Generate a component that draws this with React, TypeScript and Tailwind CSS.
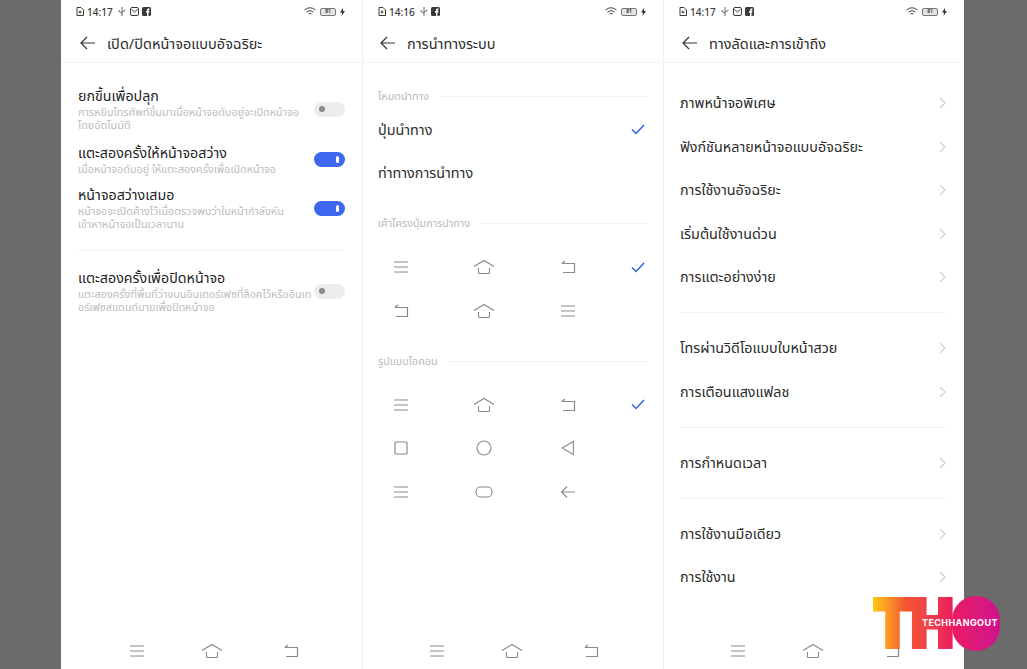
const MenuIcon = () => (
  <svg width="16" height="14" viewBox="0 0 16 14" fill="none" stroke="#8a8a8a" strokeWidth="1.2">
    <path d="M1 2h14M1 7h14M1 12h14" />
  </svg>
);

const HomeIcon = () => (
  <svg width="22" height="16" viewBox="0 0 22 16" fill="none" stroke="#8a8a8a" strokeWidth="1.1">
    <path d="M1 7.500 11 1.500l10 6" />
    <path d="M5.500 9v4.500c0 .6.4 1 1 1h9c.6 0 1-.4 1-1V9" />
  </svg>
);

const ReturnIcon = () => (
  <svg width="16" height="14" viewBox="0 0 16 14" fill="none" stroke="#8a8a8a" strokeWidth="1.2">
    <path d="M2 3.500h12.500v9H3" />
    <path d="M5 1 1.800 3.500" />
  </svg>
);

const SquareIcon = () => (
  <svg width="14" height="14" viewBox="0 0 14 14" fill="none" stroke="#8a8a8a" strokeWidth="1.2">
    <rect x="1" y="1" width="12" height="12" rx="1" />
  </svg>
);

const CircleIcon = () => (
  <svg width="16" height="16" viewBox="0 0 16 16" fill="none" stroke="#8a8a8a" strokeWidth="1.1">
    <circle cx="8" cy="8" r="7" />
  </svg>
);

const TriangleIcon = () => (
  <svg width="14" height="16" viewBox="0 0 14 16" fill="none" stroke="#8a8a8a" strokeWidth="1.1">
    <path d="M1 8 12.500 1.500v13z" />
  </svg>
);

const PillIcon = () => (
  <svg width="18" height="12" viewBox="0 0 18 12" fill="none" stroke="#8a8a8a" strokeWidth="1.1">
    <rect x="1" y="1" width="16" height="10" rx="4.500" />
  </svg>
);

const BackIcon = () => (
  <svg width="16" height="14" viewBox="0 0 16 14" fill="none" stroke="#8a8a8a" strokeWidth="1.1">
    <path d="M15 7H1.500M7 1.500 1.500 7 7 12.500" />
  </svg>
);

const Check = () => (
  <svg width="14" height="11" viewBox="0 0 14 11" fill="none" stroke="#2f5fe8" strokeWidth="1.5">
    <path d="M1 5.500 5 9.500 13 1" />
  </svg>
);

const Chevron = () => (
  <svg width="7" height="12" viewBox="0 0 7 12" fill="none" stroke="#cfcfcf" strokeWidth="1.2">
    <path d="M1 1l5 5-5 5" />
  </svg>
);

const StatusBar = ({ time, mail = true }: { time: string; mail?: boolean }) => (
  <div className="h-[23px] flex items-center justify-between pl-[15px] pr-[17px] text-[#3a3a3a]">
    <div className="flex items-center gap-[3px]">
      <svg width="8" height="9" viewBox="0 0 8 9" fill="none" stroke="#3a3a3a" strokeWidth="1">
        <path d="M1 .5h4L7.500 3v5.500H1z" />
        <circle cx="4" cy="5" r="1" />
      </svg>
      <span className="text-[10px] font-medium leading-none">{time}</span>
      <svg width="8" height="9" viewBox="0 0 8 9" fill="none" stroke="#555" strokeWidth="0.9" className="ml-[2px]">
        <path d="M4 0v9M1 3v1.500L4 6M7 2.500v1L4 5" />
      </svg>
      {mail && (
        <svg width="9" height="9" viewBox="0 0 9 9" fill="none" stroke="#3a3a3a" strokeWidth="1" className="ml-[1px]">
          <rect x=".5" y=".5" width="8" height="8" rx="1.500" />
          <path d="M1.500 2.500 4.500 5l3-2.500" />
        </svg>
      )}
      <svg width="9" height="9" viewBox="0 0 9 9">
        <rect width="9" height="9" rx="1.500" fill="#3a3a3a" />
        <path d="M5 9V5.500H4V4h1V3c0-1 .6-1.500 1.500-1.500H7.500V3H7c-.4 0-.5.2-.5.5V4h1L7.300 5.500H6.500V9z" fill="#fff" />
      </svg>
    </div>
    <div className="flex items-center gap-[4px]">
      <svg width="12" height="9" viewBox="0 0 12 9" fill="none" stroke="#444" strokeWidth="1">
        <path d="M.5 3Q6-1.500 11.500 3M2.500 5q3.500-3 7 0M4.500 7q1.500-1.300 3 0" />
      </svg>
      <div className="w-[16px] h-[8px] rounded-[2px] border border-[#777] bg-[#e4e4e4] flex items-center justify-center text-[5px] leading-none font-bold text-[#444]">
        81
      </div>
      <svg width="5" height="8" viewBox="0 0 5 8">
        <path d="M3 0 0 4.500h2L1.500 8 5 3H3z" fill="#333" />
      </svg>
    </div>
  </div>
);

const Header = ({ title, pad }: { title: string; pad: string }) => (
  <div className={`h-[40px] pt-[1px] flex items-center gap-[12px] border-b border-[#f4f4f4] ${pad}`}>
    <svg width="15" height="14" viewBox="0 0 15 14" fill="none" stroke="#333" strokeWidth="1.2">
      <path d="M15 7H1M7 1 1 7l6 6" />
    </svg>
    <span className="text-[14.500px] leading-none text-[#2b2b2b]">{title}</span>
  </div>
);

const NavBar = ({ left }: { left: string }) => (
  <div className={`mt-auto h-[36px] flex items-center shrink-0 ${left}`}>
    <div className="w-[16px] flex justify-center">
      <MenuIcon />
    </div>
    <div className="ml-[56px] w-[22px] flex justify-center">
      <HomeIcon />
    </div>
    <div className="ml-[60px] w-[16px] flex justify-center">
      <ReturnIcon />
    </div>
  </div>
);

const Toggle = ({ on }: { on?: boolean }) =>
  on ? (
    <div className="w-[31px] h-[15px] rounded-full bg-[#3d68ee] flex items-center justify-end pr-[6px] shrink-0">
      <div className="w-[3px] h-[7px] rounded-full bg-white" />
    </div>
  ) : (
    <div className="w-[31px] h-[15px] rounded-full bg-[#ececec] flex items-center pl-[5px] shrink-0">
      <div className="w-[6px] h-[6px] rounded-full bg-[#8c8c8c]" />
    </div>
  );

const SettingRow = ({
  title,
  desc,
  on,
  className,
  togglePad,
}: {
  title: string;
  desc: string[];
  on?: boolean;
  className: string;
  togglePad: string;
}) => (
  <div className={`flex justify-between ${className}`}>
    <div className="min-w-0">
      <div className="text-[14.250px] leading-[18px] text-[#1f1f1f]">{title}</div>
      {desc.map((d) => (
        <div key={d} className="text-[10.800px] leading-[13px] text-[#bcbcbc] whitespace-nowrap">
          {d}
        </div>
      ))}
    </div>
    <div className={togglePad}>
      <Toggle on={on} />
    </div>
  </div>
);

const SectionLabel = ({ text, className }: { text: string; className: string }) => (
  <div className={`flex items-center gap-[10px] ${className}`}>
    <span className="text-[10.800px] leading-[14px] text-[#b8b8b8] whitespace-nowrap">{text}</span>
    <div className="flex-1 h-px bg-[#f3f3f3]" />
  </div>
);

const IconRow = ({ icons, checked }: { icons: React.ReactNode[]; checked?: boolean }) => (
  <div className="h-[43.500px] flex items-center">
    <div className="w-[16px] flex justify-center">{icons[0]}</div>
    <div className="ml-[64px] w-[22px] flex justify-center">{icons[1]}</div>
    <div className="ml-[65px] w-[16px] flex justify-center">{icons[2]}</div>
    {checked && (
      <div className="ml-auto pr-[3px]">
        <Check />
      </div>
    )}
  </div>
);

const LinkRow = ({ text }: { text: string }) => (
  <div className="h-[43.500px] flex items-center justify-between">
    <span className="text-[14.350px] text-[#2b2b2b]">{text}</span>
    <Chevron />
  </div>
);

const Divider = ({ className }: { className: string }) => <div className={`h-px bg-[#f3f3f3] ${className}`} />;

export default function App() {
  return (
    <div
      className="w-[1027px] h-[669px] bg-[#6b6b6b] flex pl-[61px] overflow-hidden relative"
      style={{ fontFamily: '"Noto Sans", "Noto Sans Thai", "Noto Sans Thai Looped", "DejaVu Sans", sans-serif' }}
    >
      <div className="flex h-full gap-px bg-[#f1f1f1]">
        <section className="w-[301px] h-full bg-white flex flex-col">
          <StatusBar time="14:17" />
          <Header title="เปิด/ปิดหน้าจอแบบอัจฉริยะ" pad="pl-[19px]" />
          <div className="pl-[17px] pr-[17px] pt-[24px]">
            <SettingRow
              title="ยกขึ้นเพื่อปลุก"
              desc={["การหยิบโทรศัพท์ขึ้นมาเมื่อหน้าจอดับอยู่จะเปิดหน้าจอ", "โดยอัตโนมัติ"]}
              className="h-[57px]"
              togglePad="pt-[14.500px]"
            />
            <SettingRow
              title="แตะสองครั้งให้หน้าจอสว่าง"
              desc={["เมื่อหน้าจอดับอยู่ ให้แตะสองครั้งเพื่อเปิดหน้าจอ"]}
              on
              className="h-[42px]"
              togglePad="pt-[7.500px]"
            />
            <SettingRow
              title="หน้าจอสว่างเสมอ"
              desc={["หน้าจอจะเปิดค้างไว้เมื่อตรวจพบว่าใบหน้ากำลังหัน", "เข้าหาหน้าจอเป็นเวลานาน"]}
              on
              className="h-[64px]"
              togglePad="pt-[14.500px]"
            />
            <Divider className="mb-[18px]" />
            <SettingRow
              title="แตะสองครั้งเพื่อปิดหน้าจอ"
              desc={["แตะสองครั้งที่พื้นที่ว่างบนอินเตอร์เฟซที่ล็อคไว้หรืออินเต", "อร์เฟซสแตนด์บายเพื่อปิดหน้าจอ"]}
              className="h-[60px]"
              togglePad="pt-[14.500px]"
            />
          </div>
          <NavBar left="pl-[68px]" />
        </section>

        <section className="w-[300px] h-full bg-white flex flex-col">
          <StatusBar time="14:16" mail={false} />
          <Header title="การนำทางระบบ" pad="pl-[17px]" />
          <div className="pl-[15px] pr-[15px] pt-[26px]">
            <SectionLabel text="โหมดนำทาง" className="mb-[5px]" />
            <div className="h-[43.500px] flex items-center justify-between pr-[3px]">
              <span className="text-[14.350px] text-[#2b2b2b]">ปุ่มนำทาง</span>
              <Check />
            </div>
            <div className="h-[43.500px] flex items-center text-[14.350px] text-[#2b2b2b]">ท่าทางการนำทาง</div>
            <SectionLabel text="เค้าโครงปุ่มการนำทาง" className="mt-[21px] mb-[15.500px]" />
            <div className="pl-[15px]">
              <IconRow icons={[<MenuIcon />, <HomeIcon />, <ReturnIcon />]} checked />
              <IconRow icons={[<ReturnIcon />, <HomeIcon />, <MenuIcon />]} />
            </div>
            <SectionLabel text="รูปแบบไอคอน" className="mt-[21.500px] mb-[15px]" />
            <div className="pl-[15px]">
              <IconRow icons={[<MenuIcon />, <HomeIcon />, <ReturnIcon />]} checked />
              <IconRow icons={[<SquareIcon />, <CircleIcon />, <TriangleIcon />]} />
              <IconRow icons={[<MenuIcon />, <PillIcon />, <BackIcon />]} />
            </div>
          </div>
          <NavBar left="pl-[66px]" />
        </section>

        <section className="w-[300px] h-full bg-white flex flex-col">
          <StatusBar time="14:17" />
          <Header title="ทางลัดและการเข้าถึง" pad="pl-[18px]" />
          <div className="pl-[16px] pr-[18px] pt-[18.500px]">
            <LinkRow text="ภาพหน้าจอพิเศษ" />
            <LinkRow text="ฟังก์ชันหลายหน้าจอแบบอัจฉริยะ" />
            <LinkRow text="การใช้งานอัจฉริยะ" />
            <LinkRow text="เริ่มต้นใช้งานด่วน" />
            <LinkRow text="การแตะอย่างง่าย" />
            <Divider className="my-[13.250px]" />
            <LinkRow text="โทรผ่านวิดีโอแบบใบหน้าสวย" />
            <LinkRow text="การเตือนแสงแฟลช" />
            <Divider className="my-[13.250px]" />
            <LinkRow text="การกำหนดเวลา" />
            <Divider className="my-[13.250px]" />
            <LinkRow text="การใช้งานมือเดียว" />
            <LinkRow text="การใช้งาน" />
          </div>
          <NavBar left="pl-[66px]" />
        </section>
      </div>

      <div className="absolute left-[874px] top-[596px] w-[126px] h-[56px]">
        <div className="absolute left-[78px] top-0 w-[48px] h-[55px] rounded-full bg-gradient-to-r from-[#ea1a62] to-[#cf118f]" />
        <div
          className="absolute left-[-1px] top-[-8px] text-[66px] leading-[70px] font-black tracking-[-1px] text-transparent bg-clip-text bg-gradient-to-r from-[#fdc70c] via-[#f4552f] via-40% to-[#ec1b5e] origin-left scale-x-[0.86] [-webkit-text-stroke:4px_transparent]"
          style={{ fontFamily: "Inter, sans-serif" }}
        >
          TH
        </div>
        <div
          className="absolute left-[48px] top-[22px] text-[9px] leading-none font-bold tracking-[0.4px] text-white whitespace-nowrap"
          style={{ fontFamily: "Inter, sans-serif" }}
        >
          TECHHANGOUT
        </div>
      </div>
    </div>
  );
}
